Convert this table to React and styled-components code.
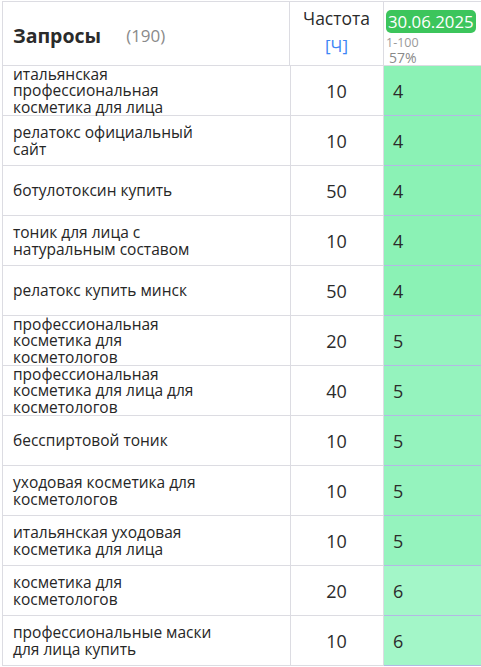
import React from 'react'
import styled, { createGlobalStyle } from 'styled-components'

const Global = createGlobalStyle`
  body {
    margin: 0;
    background: #fff;
    font-family: "Open Sans", "Noto Sans", sans-serif;
    color: #2b2b2b;
  }
`

const Table = styled.div`
  margin: 1px 0 0 2px;
  width: 479px;
  display: grid;
  grid-template-columns: 287px 94px 98px;
  border-left: 1px solid #dcdce2;
  border-top: 1px solid #dcdce2;
`

const Cell = styled.div`
  border-right: 1px solid #dcdce2;
  border-bottom: 1px solid #dcdce2;
  display: flex;
  align-items: center;
  height: 49px;
  box-sizing: content-box;
`

const HeadCell = styled(Cell)`
  height: 63px;
`

const TitleCell = styled(HeadCell)`
  padding-left: 10px;
  gap: 25px;
  padding-top: 4px;
  height: 59px;
`

const Title = styled.span`
  font-size: 19.5px;
  font-weight: 700;
  color: #2b2b2b;
`

const Count = styled.span`
  font-size: 17px;
  color: #8a8a8a;
`

const FreqHead = styled(HeadCell)`
  flex-direction: column;
  justify-content: flex-start;
  padding-top: 4px;
  height: 59px;
  font-size: 17.5px;
  line-height: 24px;
  gap: 4px;
`

const Blue = styled.span`
  color: #3d86f5;
  font-size: 17px;
`

const DateHead = styled(HeadCell)`
  flex-direction: column;
  align-items: flex-start;
  padding: 8px 0 0 2px;
  height: 55px;
`

const Pill = styled.span`
  background: #3cc55c;
  color: #fff;
  font-size: 16.8px;
  line-height: 23px;
  padding: 0 2px;
  border-radius: 5px;
`

const Range = styled.span`
  font-size: 12.5px;
  line-height: 13px;
  color: #999;
  margin-top: 3px;
`

const Pct = styled.span`
  font-size: 14px;
  line-height: 15px;
  color: #8a8a8a;
  margin: 1px 0 0 3px;
`

const Query = styled(Cell)`
  padding-left: 10px;
  width: 277px;
  font-size: 15.5px;
  line-height: 16.5px;
  color: #262626;
`

const QueryText = styled.span`
  max-width: 200px;
`

const Freq = styled(Cell)`
  justify-content: center;
  font-size: 18px;
`

const Pos = styled(Cell)`
  padding-left: 9px;
  width: 88px;
  font-size: 18px;
  background: ${p => p.bg};
  border-right-color: #b3b8e4;
  border-bottom-color: #b3b8e4;
`

const colors = { 4: '#8bf2b5', 5: '#95f3be', 6: '#a3f6c8' }

const rows = [
  ['итальянская профессиональная косметика для лица', 10, 4],
  ['релатокс официальный сайт', 10, 4],
  ['ботулотоксин купить', 50, 4],
  ['тоник для лица с натуральным составом', 10, 4],
  ['релатокс купить минск', 50, 4],
  ['профессиональная косметика для косметологов', 20, 5],
  ['профессиональная косметика для лица для косметологов', 40, 5],
  ['бесспиртовой тоник', 10, 5],
  ['уходовая косметика для косметологов', 10, 5],
  ['итальянская уходовая косметика для лица', 10, 5],
  ['косметика для косметологов', 20, 6],
  ['профессиональные маски для лица купить', 10, 6],
]

const widths = [185, 185, 205, 205, 205, 165, 205, 205, 205, 205, 145, 225]

export default function App() {
  return (
    <>
      <Global />
      <Table>
        <TitleCell>
          <Title>Запросы</Title>
          <Count>(190)</Count>
        </TitleCell>
        <FreqHead>
          <span>Частота</span>
          <Blue>[Ч]</Blue>
        </FreqHead>
        <DateHead>
          <Pill>30.06.2025</Pill>
          <Range>1-100</Range>
          <Pct>57%</Pct>
        </DateHead>
        {rows.map(([q, f, p], i) => (
          <React.Fragment key={i}>
            <Query>
              <QueryText style={{ maxWidth: widths[i] }}>{q}</QueryText>
            </Query>
            <Freq>{f}</Freq>
            <Pos bg={colors[p]}>{p}</Pos>
          </React.Fragment>
        ))}
      </Table>
    </>
  )
}
